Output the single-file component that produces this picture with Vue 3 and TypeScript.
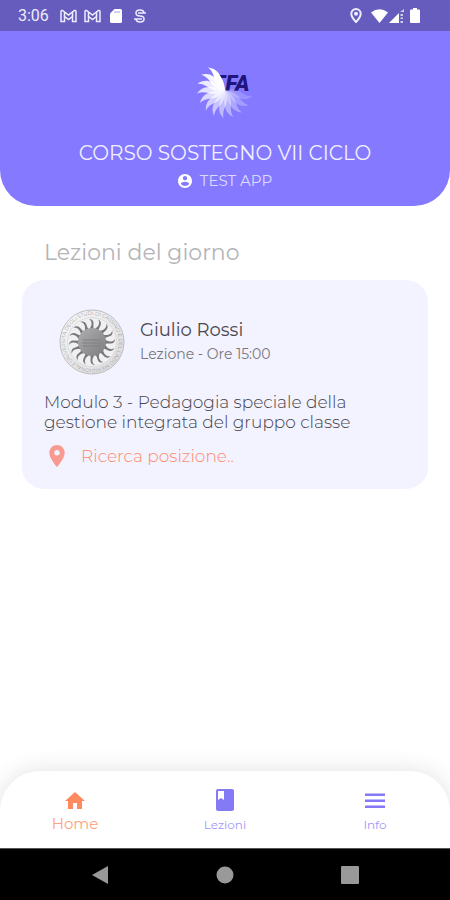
<script setup lang="ts">
import { ref } from 'vue'

type TabId = 'home' | 'lezioni' | 'info'

interface Tab {
  id: TabId
  label: string
  icon: string
}

interface Lesson {
  id: number
  teacher: string
  kind: string
  time: string
  title: string
}

const tabs: Tab[] = [
  { id: 'home', label: 'Home', icon: 'M10 20v-6h4v6h5v-8h3L12 3 2 12h3v8z' },
  {
    id: 'lezioni',
    label: 'Lezioni',
    icon: 'M19 1H5c-1.1 0-2 .9-2 2v18c0 1.1.9 2 2 2h14c1.1 0 2-.9 2-2V3c0-1.100-.9-2-2-2zM5 3h6v9l-3-2L5 12z',
  },
  { id: 'info', label: 'Info', icon: 'M2 20h20v-2.500H2V20zm0-6h20v-2.500H2V14zm0-8.500V8h20V5.500H2z' },
]

const lessons: Lesson[] = [
  {
    id: 1,
    teacher: 'Giulio Rossi',
    kind: 'Lezione',
    time: '15:00',
    title: 'Modulo 3 - Pedagogia speciale della gestione integrata del gruppo classe',
  },
]

const active = ref<TabId>('home')

// Rays run counter-clockwise from the upper left and fade towards the right.
const logoRays = Array.from({ length: 12 }, (_, i) => ({
  angle: -29 - i * 20,
  opacity: 1 - i * 0.074,
}))
const sealRays = Array.from({ length: 16 }, (_, i) => i * 22.5)
</script>

<template>
  <div class="screen">
    <div class="status">
      <span class="clock">3:06</span>
      <svg v-for="n in 2" :key="n" class="mail" viewBox="0 0 17 14" aria-hidden="true">
        <path d="M1 12.500V2.500Q1 1 2.500 1.500L8.500 6l6-4.500Q16 1 16 2.500v10h-3.500V7.500l-4 3-4-3v5z" />
        <path d="M4.500 3v4.500M12.500 3v4.500" />
      </svg>
      <svg class="sd" viewBox="0 0 12 14" aria-hidden="true">
        <path d="M4.500 0H10.500Q12 0 12 1.500V12.500Q12 14 10.500 14H1.500Q0 14 0 12.500V4.500z" />
        <path class="slots" d="M4 3h6" />
      </svg>
      <svg class="sync" viewBox="0 0 12 14" aria-hidden="true">
        <path d="M10 4.500C10 2 8.500 1 6 1S2 2 2 4s1 3 4 3 4 1 4 3-1.500 3-4 3-4-1-4-3.500M4 4h8M0 10h8" />
      </svg>
      <span class="spacer"></span>
      <svg class="locate" viewBox="0 0 12 15" aria-hidden="true">
        <path d="M6 1a4.700 4.700 0 0 0-4.700 4.700C1.300 9 6 14 6 14s4.700-5 4.700-8.300A4.700 4.700 0 0 0 6 1z" />
        <circle cx="6" cy="5.700" r="1" />
      </svg>
      <svg class="wifi" viewBox="0 0 17 14" aria-hidden="true">
        <path d="M8.500 14L0 3.500Q8.500-3 17 3.500z" />
      </svg>
      <svg class="signal" viewBox="0 0 15 14" aria-hidden="true">
        <path d="M0 14L10 4v10z" />
        <path d="M11 3l4-3v3zM11.500 5H14v2h-2.500zM11.500 8.500H14V10h-2.500zM11.500 12H14v2h-2.500z" opacity=".7" />
      </svg>
      <svg class="battery" viewBox="0 0 10 15" aria-hidden="true">
        <path d="M3 0h4v1.500h2q1 0 1 1V14q0 1-1 1H1q-1 0-1-1V2.500q0-1 1-1h2z" />
      </svg>
    </div>

    <header class="hero">
      <svg class="logo" viewBox="-30 -30 60 60" role="img" aria-label="TFA">
        <text class="logo-text" x="-13" y="1">TFA</text>
        <g v-for="ray in logoRays" :key="ray.angle" :transform="`rotate(${ray.angle})`" :opacity="ray.opacity">
          <path d="M0 0C-4-6-5-11-3.500-16-2.500-20-2-24-4-28 0-25 2-22 2.500-18 3-12 3-6 0 0z" fill="#fff" />
        </g>
      </svg>
      <h1>CORSO SOSTEGNO VII CICLO</h1>
      <p class="user">
        <svg class="avatar" viewBox="2 2 20 20" aria-hidden="true">
          <path d="M12 2C6.480 2 2 6.480 2 12s4.480 10 10 10 10-4.480 10-10S17.520 2 12 2zm0 3c1.660 0 3 1.340 3 3s-1.340 3-3 3-3-1.340-3-3 1.340-3 3-3zm0 14.200c-2.500 0-4.710-1.280-6-3.220.03-1.990 4-3.080 6-3.080 1.990 0 5.970 1.090 6 3.080-1.290 1.940-3.500 3.220-6 3.220z" />
        </svg>
        <span>TEST APP</span>
      </p>
    </header>

    <main>
      <h2>Lezioni del giorno</h2>
      <article v-for="lesson in lessons" :key="lesson.id" class="card">
        <div class="teacher">
          <svg class="seal" viewBox="-33 -33 66 66" aria-hidden="true">
            <defs>
              <linearGradient id="seal-sun" x1="0" y1="0" x2="1" y2="1">
                <stop offset="0" stop-color="#b0b0b2" />
                <stop offset="1" stop-color="#7c7c7e" />
              </linearGradient>
              <linearGradient id="seal-disc" x1="0" y1="0" x2="1" y2="1">
                <stop offset="0" stop-color="#fafafa" />
                <stop offset="1" stop-color="#d8d8da" />
              </linearGradient>
              <path id="seal-ring" d="M-19 19A26.900 26.900 0 1 1 19 19A26.900 26.900 0 0 1-19 19" />
            </defs>
            <circle r="32" fill="url(#seal-disc)" stroke="#bcbcc0" />
            <circle r="24.500" fill="#f0f0f2" stroke="#dcdcde" />
            <text class="seal-text">
              <textPath href="#seal-ring">UNIVERSITÀ DEGLI STUDI DI CASSINO E DEL LAZIO MERIDIONALE</textPath>
            </text>
            <path
              v-for="angle in sealRays"
              :key="angle"
              :transform="`rotate(${angle})`"
              d="M-2.500-12C-2-15 0-16-.500-19-.500-21-1.500-22-3-23 0-23 1.500-21 1.500-19 1.500-16 1-14 2-12z"
              fill="#78787a"
            />
            <circle r="14" fill="url(#seal-sun)" />
            <path d="M-9-2H9M-10 1H10M-9 4H9" stroke="#808082" stroke-width="1" />
          </svg>
          <div>
            <h3>{{ lesson.teacher }}</h3>
            <p class="when">{{ lesson.kind }} - Ore {{ lesson.time }}</p>
          </div>
        </div>
        <p class="title">{{ lesson.title }}</p>
        <p class="place">
          <svg class="pin" viewBox="5 2 14 20" aria-hidden="true">
            <path d="M12 2C8.130 2 5 5.130 5 9c0 5.250 7 13 7 13s7-7.750 7-13c0-3.870-3.130-7-7-7zm0 9.500a2.500 2.500 0 1 1 0-5 2.500 2.500 0 0 1 0 5z" />
          </svg>
          <span>Ricerca posizione..</span>
        </p>
      </article>
    </main>

    <nav class="tabs">
      <button
        v-for="tab in tabs"
        :key="tab.id"
        type="button"
        :class="{ active: active === tab.id }"
        @click="active = tab.id"
      >
        <svg viewBox="0 0 24 24" aria-hidden="true"><path :d="tab.icon" /></svg>
        <span>{{ tab.label }}</span>
      </button>
    </nav>

    <div class="system">
      <button type="button" aria-label="Indietro">
        <svg viewBox="0 0 18 18"><path d="M1 9L17 0v18z" /></svg>
      </button>
      <button type="button" aria-label="Schermata principale">
        <svg viewBox="0 0 18 18"><circle cx="9" cy="9" r="8.500" /></svg>
      </button>
      <button type="button" aria-label="App recenti">
        <svg viewBox="0 0 18 18"><rect width="18" height="18" rx="1" /></svg>
      </button>
    </div>
  </div>
</template>

<style>
body {
  background: #fff;
}
</style>

<style scoped>
.screen {
  display: flex;
  flex-direction: column;
  min-height: 100vh;
  overflow: hidden;
  background: #fff;
  font-family: Montserrat, Inter, "Open Sans", sans-serif;
  color: #44444a;
}

h1,
h2,
h3,
p {
  margin: 0;
  font-weight: 400;
}

svg {
  display: block;
  flex: none;
}

button {
  padding: 0;
  border: 0;
  background: none;
  font: inherit;
  cursor: pointer;
}

.status {
  display: flex;
  align-items: center;
  height: 31px;
  padding: 0 30px 0 18px;
  background: #655cbd;
  color: #eeecff;
  fill: #fff;
}

.clock {
  width: 42px;
  font-family: Roboto, sans-serif;
  font-size: 16px;
}

.mail {
  width: 17px;
  height: 14px;
  margin-right: 7px;
  fill: none;
  stroke: #eeecff;
  stroke-width: 1.5;
}

.sd {
  width: 12px;
  height: 14px;
  margin: 0 12px 0 2px;
}

.slots {
  stroke: #a9a2e0;
}

.sync {
  width: 12px;
  height: 14px;
  fill: none;
  stroke: #eeecff;
  stroke-width: 1.5;
}

.spacer {
  flex: 1;
}

.locate {
  width: 12px;
  height: 15px;
  margin-right: 9px;
  fill: none;
  stroke: #eeecff;
  stroke-width: 2;
}

.wifi {
  width: 17px;
  height: 14px;
  margin-right: 1px;
}

.signal {
  width: 15px;
  height: 14px;
  margin-right: 6px;
}

.battery {
  width: 10px;
  height: 15px;
}

.hero {
  display: flex;
  flex-direction: column;
  align-items: center;
  padding: 29px 16px 15px;
  border-radius: 0 0 36px 36px;
  background: #857aff;
  color: #f1efff;
}

.logo {
  width: 60px;
  height: 60px;
}

.logo-text {
  fill: #21147c;
  font-family: Roboto, sans-serif;
  font-size: 22px;
  font-style: italic;
  font-weight: 900;
}

h1 {
  margin-top: 20px;
  font-size: 20px;
  line-height: 26px;
}

.user {
  display: flex;
  align-items: center;
  gap: 8px;
  margin-top: 5px;
  font-size: 15px;
  line-height: 20px;
  color: #dedaff;
}

.avatar {
  width: 14px;
  height: 14px;
  fill: #fff;
}

main {
  flex: 1;
  padding: 33px 22px;
}

h2 {
  padding-left: 22px;
  font-size: 22px;
  line-height: 28px;
  color: #b4b4b6;
}

.card {
  margin-top: 13px;
  padding: 29px 22px 21px;
  border-radius: 22px;
  background: #f3f2ff;
}

.teacher {
  display: flex;
  align-items: center;
  gap: 15px;
  padding-left: 15px;
}

.seal {
  width: 66px;
  height: 66px;
}

.seal-text {
  fill: #a0a0a4;
  font-size: 5px;
}

h3 {
  font-size: 18px;
  line-height: 24px;
  color: #48484d;
}

.when {
  font-size: 14px;
  line-height: 24px;
  color: #77777c;
}

.title {
  max-width: 320px;
  margin-top: 17px;
  font-size: 17px;
  font-weight: 300;
  line-height: 20px;
}

.place {
  display: flex;
  align-items: center;
  gap: 16px;
  margin-top: 12px;
  padding-left: 5px;
  font-size: 17px;
  font-weight: 300;
  line-height: 24px;
  color: #ff8a6c;
}

.pin {
  width: 16px;
  height: 22px;
  fill: #f99a91;
}

.tabs {
  display: grid;
  grid-template-columns: repeat(3, 1fr);
  height: 77px;
  border-radius: 40px 40px 0 0;
  background: #fff;
  box-shadow: 0 0 24px rgb(0 0 0 / 12%);
}

.tabs button {
  display: flex;
  flex-direction: column;
  align-items: center;
  justify-content: center;
  gap: 5px;
  padding-top: 2px;
  color: #a198fa;
  fill: #8579f6;
  font-size: 12px;
  line-height: 16px;
}

.tabs svg {
  width: 24px;
  height: 24px;
}

.tabs .active {
  gap: 3px;
  color: #ffa080;
  fill: #ff8a60;
  font-size: 15px;
}

.system {
  display: grid;
  grid-template-columns: repeat(3, 125px);
  justify-content: center;
  height: 52px;
  box-sizing: border-box;
  border-top: 1px solid #555;
  background: #000;
  position: relative;
}

.system button {
  display: grid;
  place-items: center;
}

.system svg {
  width: 18px;
  height: 18px;
  fill: #999;
}
</style>
